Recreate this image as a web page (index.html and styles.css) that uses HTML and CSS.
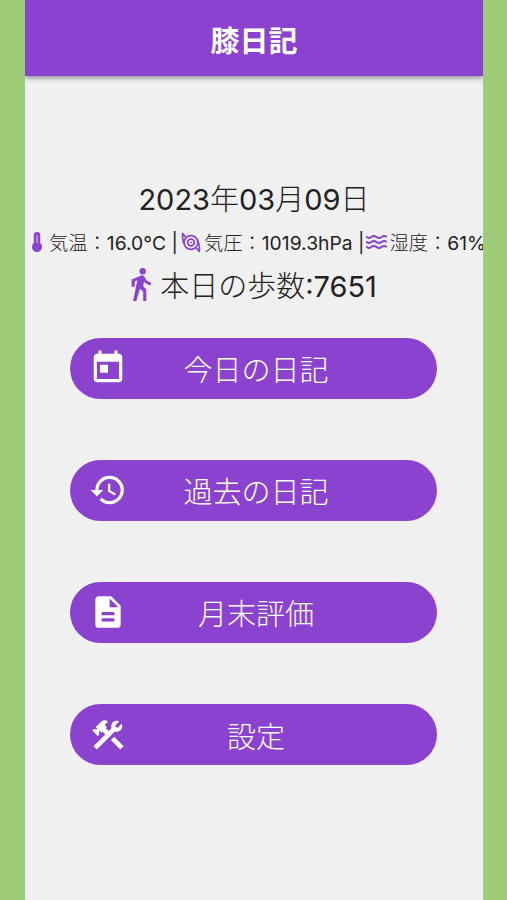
FILE: index.html
```
<!DOCTYPE html>
<html lang="ja">
<head>
    <meta charset="UTF-8">
    <meta name="viewport" content="width=device-width, initial-scale=1.0">
    <title>膝日記</title>
    <link rel="stylesheet" href="styles.css">
</head>
<body>
    <div class="screen">
        <header class="header">
            <h1>膝日記</h1>
        </header>
        <main class="main">
            <p class="date">2023<span class="jp">年</span>03<span class="jp">月</span>09<span class="jp">日</span></p>

            <div class="weather">
                <svg class="icon-temp" viewBox="0 0 12 22"><path d="M6 0a3.4 3.4 0 0 0-3.4 3.4v8.2a5.3 5.3 0 1 0 6.8 0V3.4A3.4 3.4 0 0 0 6 0z"/><path class="tube" d="M6 3.4v8"/></svg>
                <span class="temp"><span class="jp">気温：</span>16.0°C |</span>
                <svg class="icon-cyclone" viewBox="0 0 20 22"><circle cx="10" cy="11" r="7.2"/><circle cx="10" cy="11" r="3.5"/><circle class="dot" cx="10" cy="11" r="1"/><path d="M3.1 13C1.1 9.2.8 5 1.4 1M16.9 9c2 3.8 2.3 8 1.7 12"/><path d="M1.5 1.5c.7 1.6 1.7 2.8 3 3.7M18.500 20.500c-.7-1.600-1.700-2.800-3-3.700"/></svg>
                <span class="pressure"><span class="jp">気圧：</span>1019.3hPa |</span>
                <svg class="icon-waves" viewBox="0 0 21 14"><path d="M0 1.500q2.600 2.600 5.200 .500t5.200 0t5.200 0t5.200 0M0 6.500q2.600 2.600 5.200 .500t5.200 0t5.200 0t5.200 0M0 11.500q2.600 2.600 5.200 .500t5.200 0t5.200 0t5.200 0"/></svg>
                <span class="humidity"><span class="jp">湿度：</span>61%</span>
            </div>

            <div class="steps">
                <svg class="icon-walk" viewBox="0 0 21 33"><circle cx="11.700" cy="3.200" r="3.200"/><path d="M10.800 7.200c1.300 0 2.200.6 2.800 1.700l1.500 2.900c.9 1.400 2.700 2.100 5.100 2.900l-.9 2.700c-2.700-.7-4.900-1.900-6.300-3.800l-.8 4.600 3.100 3.200V33h-3.100v-9.200L9 20.700 5.300 33H2.100L6.300 12.200l-2.600 1.300v5.200H.6v-7.200z"/></svg>
                <span><span class="jp">本日の歩数</span>:7651</span>
            </div>

            <nav class="menu">
                <button class="menu-button">
                    <svg viewBox="0 0 24 24"><path d="M19 3h-1V1h-2v2H8V1H6v2H5c-1.110 0-1.990.9-1.990 2L3 19c0 1.100.89 2 2 2h14c1.100 0 2-.9 2-2V5c0-1.100-.9-2-2-2zm0 16H5V8h14v11zM7 10h5v5H7z"/></svg>
                    <span>今日の日記</span>
                </button>
                <button class="menu-button">
                    <svg viewBox="0 0 24 24"><path d="M13 3a9 9 0 0 0-9 9H1l3.890 3.890.070.140L9 12H6c0-3.870 3.130-7 7-7s7 3.130 7 7-3.130 7-7 7c-1.930 0-3.680-.79-4.940-2.060l-1.420 1.420A8.954 8.954 0 0 0 13 21a9 9 0 0 0 0-18zm-1 5v5l4.280 2.540.72-1.210-3.500-2.080V8H12z"/></svg>
                    <span>過去の日記</span>
                </button>
                <button class="menu-button">
                    <svg viewBox="0 0 24 24"><path d="M14 2H6c-1.100 0-1.990.9-1.990 2L4 20c0 1.100.89 2 1.990 2H18c1.100 0 2-.9 2-2V8l-6-6zm2 16H8v-2h8v2zm0-4H8v-2h8v2zm-3-5V3.500L18.500 9H13z"/></svg>
                    <span>月末評価</span>
                </button>
                <button class="menu-button">
                    <svg viewBox="0 0 24 24"><path d="M13.783 15.172l2.121-2.121 5.996 5.996-2.121 2.121zM17.500 10c1.930 0 3.500-1.570 3.500-3.500 0-.58-.16-1.120-.41-1.600l-2.700 2.700-1.490-1.490 2.700-2.700c-.48-.25-1.020-.41-1.600-.41C15.570 3 14 4.570 14 6.500c0 .41.080.8.210 1.160l-1.850 1.850-1.780-1.780.71-.71-1.410-1.410L12 3.490a3 3 0 0 0-4.240 0L4.220 7.030l1.410 1.410H2.810l-.71.71 3.540 3.540.71-.71V9.150l1.410 1.410.71-.71 1.780 1.780-7.410 7.410 2.120 2.120L16.340 9.790c.36.130.75.210 1.160.210z"/></svg>
                    <span>設定</span>
                </button>
            </nav>
        </main>
    </div>
</body>
</html>
```
FILE: styles.css
```
* {
    box-sizing: border-box;
}
body {
    margin: 0;
    padding: 0 24px 0 25px;
    height: 100vh;
    background-color: #a0cc78;
    font-family: Inter, "Noto Sans CJK JP", sans-serif;
    color: #222;
}
.screen {
    height: 100%;
    background-color: #f0f0f0;
    overflow: hidden;
}
.header {
    height: 76px;
    padding-top: 20px;
    background-color: #8b42cf;
    box-shadow: 0 2px 5px rgba(0, 0, 0, 0.4);
    text-align: center;
}
h1 {
    margin: 0;
    color: #fff;
    font-size: 29px;
    line-height: 44px;
    font-weight: 700;
}
.main {
    display: flex;
    flex-direction: column;
    padding-top: 98px;
}
.jp {
    font-family: "Noto Sans CJK JP", sans-serif;
    font-weight: 300;
}
.date {
    margin: 0;
    text-align: center;
    font-size: 29px;
    line-height: 46px;
}
.weather {
    display: flex;
    align-items: center;
    height: 38px;
    padding-left: 6px;
    font-size: 19.3px;
    white-space: nowrap;
}
.weather svg {
    flex-shrink: 0;
    fill: none;
    stroke: #8b42cf;
}
.weather .icon-temp {
    width: 12px;
    height: 21px;
    margin-right: 6px;
    fill: #8b42cf;
    stroke: none;
}
.weather .tube {
    stroke: #f0f0f0;
    stroke-width: 1.2;
    opacity: 0.7;
}
.weather .icon-cyclone {
    width: 20px;
    height: 21px;
    margin: 0 3px;
    stroke-width: 1.8;
}
.weather .dot {
    fill: #8b42cf;
    stroke: none;
}
.weather .icon-waves {
    width: 21px;
    height: 14px;
    margin: 0 2px;
    stroke-width: 2;
}
.steps {
    display: flex;
    justify-content: center;
    align-items: center;
    height: 46px;
    gap: 8px;
    font-size: 29px;
}
.icon-walk {
    width: 21px;
    height: 33px;
    fill: #8b42cf;
}
.menu {
    display: flex;
    flex-direction: column;
    gap: 61.2px;
    padding: 30.500px 46px 0 45px;
}
.menu-button {
    display: flex;
    align-items: center;
    height: 61px;
    padding: 0 52px 0 19px;
    border: none;
    border-radius: 31px;
    background-color: #8b42cf;
    color: #fff;
    font-family: "Noto Sans CJK JP", sans-serif;
    font-size: 29px;
    font-weight: 300;
}
.menu-button svg {
    width: 38px;
    height: 38px;
    fill: #fff;
}
.menu-button span {
    flex: 1;
    text-align: center;
    line-height: 40px;
}
```
